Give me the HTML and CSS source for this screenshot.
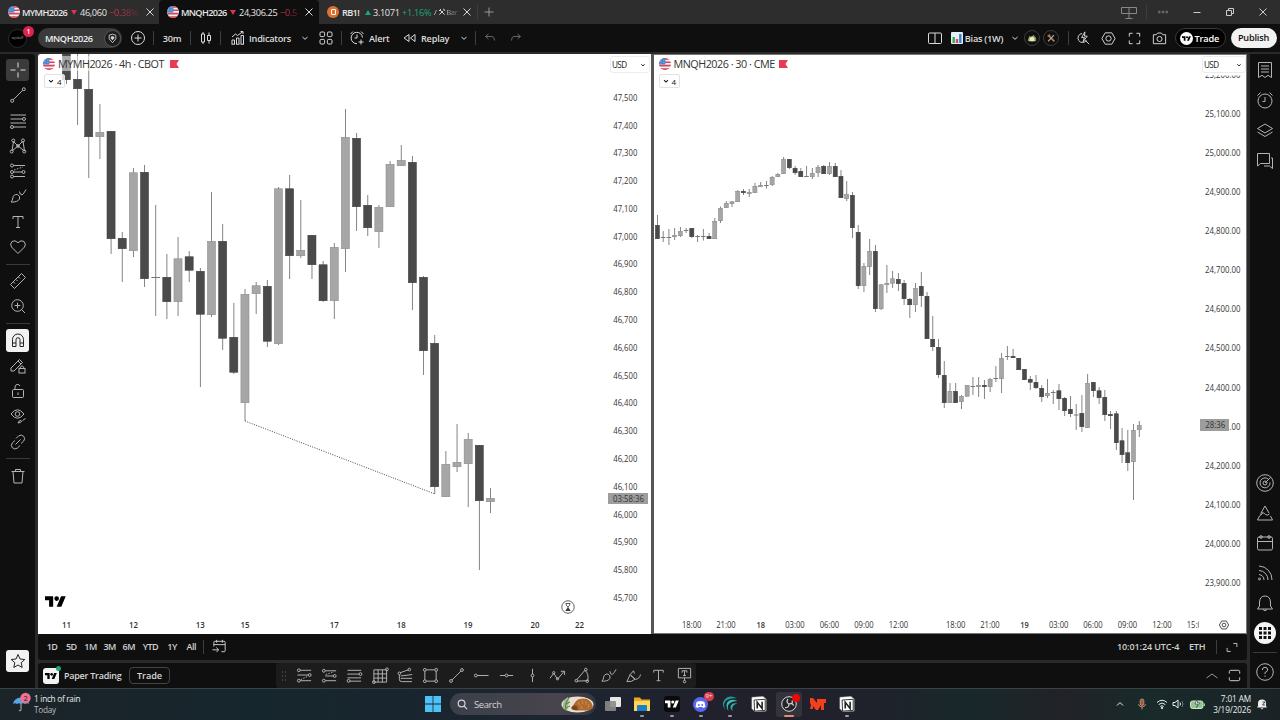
FILE: index.html
```
<!DOCTYPE html>
<html lang="en">
<head>
    <meta charset="UTF-8">
    <title>MNQH2026 24,306.25 Bias (1W)</title>
    <link rel="stylesheet" href="styles.css">
</head>
<body>
    <!-- icon sprite -->
    <svg class="sprite" width="0" height="0">
        <defs>
            <clipPath id="round"><circle cx="6" cy="6" r="6"/></clipPath>
        </defs>
        <symbol id="flag" viewBox="0 0 12 12">
            <g clip-path="url(#round)" stroke="none">
                <rect width="12" height="12" fill="#f3f3f5"/>
                <path fill="#e0404f" d="M0 0h12v1.7H0zM0 3.4h12v1.7H0zM0 6.8h12v1.7H0zM0 10.2h12V12H0z"/>
                <path fill="#3f82cf" d="M0 0h6.4v6.4H0z"/>
                <path stroke="#b5d4f5" stroke-width=".6" stroke-dasharray=".7 .8" d="M1 1.6h5M1 3.2h5M1 4.8h5"/>
            </g>
        </symbol>
        <symbol id="tv" viewBox="0 0 36 18"><path fill="currentColor" stroke="none" d="M14 18H7V7H0V0h14zM28 18h-8L27.500 0h8z"/><circle fill="currentColor" stroke="none" cx="20" cy="4" r="4"/></symbol>
        <symbol id="x" viewBox="0 0 18 18"><path d="M5.500 5.500l7 7M12.500 5.500l-7 7"/></symbol>
        <symbol id="plus" viewBox="0 0 18 18"><path d="M9 4.500v9M4.500 9h9"/></symbol>
        <symbol id="down" viewBox="0 0 18 18"><path d="M6.500 8L9 10.300 11.500 8"/></symbol>
        <symbol id="up" viewBox="0 0 18 18"><path d="M3.500 11L9 7l5.500 4"/></symbol>
        <symbol id="shield" viewBox="0 0 18 18"><path d="M5 5l4-1.200L13 5v4.500L9 14 5 9.500z"/><path fill="currentColor" d="M7.500 7h3v2L9 10.500 7.500 9z"/></symbol>
        <symbol id="pluscircle" viewBox="0 0 18 18"><circle cx="9" cy="9" r="6.500"/><path d="M9 5.500v7M5.500 9h7"/></symbol>
        <symbol id="candles" viewBox="0 0 18 18"><path d="M4.500 5h3v8h-3zM6 3v2M6 13v2M10.500 6.500h3v5h-3zM12 3.500v3M12 11.500v3"/></symbol>
        <symbol id="indicators" viewBox="0 0 18 18"><path d="M3 15v-4h2.500v4M7.500 15V9H10v6M12 15V6.500h2.500V15M2.500 15.200h3.500M7 15.200h3.500M11.500 15.200H15M3 8l3.500-3 2 1.500L14 2.500M11.500 2.500H14V5"/></symbol>
        <symbol id="grid4" viewBox="0 0 18 18"><rect x="3" y="3" width="4.600" height="4.600" rx="1.200"/><rect x="10.400" y="3" width="4.600" height="4.600" rx="1.200"/><rect x="3" y="10.400" width="4.600" height="4.600" rx="1.200"/><rect x="10.400" y="10.400" width="4.600" height="4.600" rx="1.200"/></symbol>
        <symbol id="alertadd" viewBox="0 0 18 18"><path d="M14.500 8.500A5.700 5.700 0 1 0 9 14.700M9 5.500V9H6.500M2.500 5L5 2.500M13 2.500L15.500 5M13 10.500v5M10.500 13h5"/></symbol>
        <symbol id="replay" viewBox="0 0 18 18"><path d="M8 5.500v7L3 9zM14 5.500v7L9.500 9z"/></symbol>
        <symbol id="undo" viewBox="0 0 18 18"><path d="M7.500 5L4.500 7.500 7.500 10M4.500 7.500H11q2.500 0 2.500 4"/></symbol>
        <symbol id="redo" viewBox="0 0 18 18"><path d="M10.500 5l3 2.500-3 2.500M13.500 7.500H7q-2.500 0-2.500 4"/></symbol>
        <symbol id="split" viewBox="0 0 18 18"><rect x="2.500" y="4" width="13" height="10.500" rx="1"/><path d="M9 4v10.500"/></symbol>
        <symbol id="bars" viewBox="0 0 12 12"><rect stroke="none" width="12" height="12" rx="1" fill="#e4eef5"/><g stroke="none"><path fill="#36a852" d="M1.500 5h2.400v6H1.500z"/><path fill="#d94a5c" d="M4.800 7h2.400v4H4.800z"/><path fill="#3c7fd0" d="M8.100 2h2.400v9H8.100z"/></g></symbol>
        <symbol id="boltsearch" viewBox="0 0 18 18"><path d="M7.500 3.700a4.800 4.800 0 1 0 4.600 7.200M11 11l4 4M10.500 2L7 8h3L8.500 12.500 13 6.500h-3z"/></symbol>
        <symbol id="hex" viewBox="0 0 18 18"><path d="M5.500 3h7L16 9l-3.500 6h-7L2 9z"/><circle cx="9" cy="9" r="2.800"/></symbol>
        <symbol id="corners" viewBox="0 0 18 18"><path d="M3.500 7V3.500H7M11 3.500h3.500V7M14.500 11v3.500H11M7 14.500H3.500V11"/></symbol>
        <symbol id="camera" viewBox="0 0 18 18"><path d="M2.500 5h3L7 3.200h4L12.500 5h3v9.500h-13z"/><circle cx="9" cy="9.500" r="2.700"/></symbol>
        <symbol id="cross" viewBox="0 0 18 18"><path d="M9 1.500v5M9 11.500v5M1.500 9h5M11.500 9h5"/></symbol>
        <symbol id="trend" viewBox="0 0 18 18"><path d="M4.300 13.700l9.400-9.400"/><circle cx="3.200" cy="14.800" r="1.500"/><circle cx="14.800" cy="3.200" r="1.500"/></symbol>
        <symbol id="fib" viewBox="0 0 18 18"><path d="M1.500 3H17M1.500 7h12M1.500 11H17M4.500 15H17"/><circle cx="15" cy="7" r="1.500"/><circle cx="3" cy="15" r="1.500"/></symbol>
        <symbol id="pattern" viewBox="0 0 18 18"><path d="M3 14L4.500 4.500 9 9l5-5 1.500 10L9 9 3 14"/><circle cx="2.700" cy="14.500" r="1.500"/><circle cx="4.300" cy="3.500" r="1.500"/><circle cx="14" cy="3.500" r="1.500"/><circle cx="15.300" cy="14.500" r="1.500"/><circle cx="9" cy="9" r="1.300"/></symbol>
        <symbol id="forecast" viewBox="0 0 18 18"><path d="M4.500 3.500H16M4.500 10H13M4.500 14.500H16"/><path stroke-dasharray="1.500 1.500" d="M5 8l9-3"/><circle cx="3" cy="3.500" r="1.500"/><circle cx="3" cy="10" r="1.500"/><circle cx="14.500" cy="10" r="1.500"/><circle cx="3" cy="14.500" r="1.500"/></symbol>
        <symbol id="retrace" viewBox="0 0 18 18"><path d="M4.500 3.500H16M1.500 8.500H13M4.500 14.500H16"/><path stroke-dasharray="1.500 1.500" d="M5 13.500l8-4"/><circle cx="3" cy="3.500" r="1.500"/><circle cx="14.500" cy="8.500" r="1.500"/><circle cx="3" cy="14.500" r="1.500"/></symbol>
        <symbol id="project" viewBox="0 0 18 18"><path d="M4.500 4H16M4.500 9.500H13M4.500 14.500H16"/><path stroke-dasharray="1.500 1.500" d="M5 8l9-3"/><circle cx="3" cy="4" r="1.500"/><circle cx="14.500" cy="9.500" r="1.500"/><circle cx="3" cy="14.500" r="1.500"/></symbol>
        <symbol id="brush" viewBox="0 0 18 18"><path d="M2 15q1.500-1 1.800-4Q4.500 7 8.500 7.500q3 1.500 2 4.500Q8.500 15.500 2 15zM10.500 4.500q0 3 2.500 3.500 2-1.500 4-5.500"/></symbol>
        <symbol id="text" viewBox="0 0 18 18"><path d="M4 6V3.500h10V6M9 3.500v11M7 14.500h4"/></symbol>
        <symbol id="heart" viewBox="0 0 18 18"><path d="M9 15.500L2.500 9Q.500 6 3 3.500q3-2 6 1.200 3-3.200 6-1.200 2.500 2.500.5 5.500z"/></symbol>
        <symbol id="ruler" viewBox="0 0 18 18"><path d="M1.500 12.500l11-11 4 4-11 11zM4.500 10l1.500 1.500M7 7.500L8.500 9M9.500 5L11 6.500M12 2.500"/></symbol>
        <symbol id="zoomin" viewBox="0 0 18 18"><circle cx="8.500" cy="8.500" r="5.800"/><path d="M12.700 12.700l3.300 3.300M8.500 5.700v5.600M5.700 8.500h5.600"/></symbol>
        <symbol id="magnet" viewBox="0 0 18 18"><path d="M3.500 15.500V8.500a5.500 5.500 0 0 1 11 0v7H11V8.700a2 2 0 0 0-4 0v6.800zM3.500 12H7M11 12h3.500"/></symbol>
        <symbol id="pencillock" viewBox="0 0 18 18"><path d="M2 11L10.500 2.500l3 3L5 14H2zM9 4l3 3"/><rect x="10" y="11.500" width="6" height="4.500"/><path d="M11.300 11.500V10q1.700-2.500 3.400 0v1.500"/></symbol>
        <symbol id="lock" viewBox="0 0 18 18"><rect x="3.500" y="7.500" width="11" height="8" rx="1"/><path d="M6 7.500V5a2.600 2.600 0 0 1 5-1M9 10.500v2.500" /></symbol>
        <symbol id="eye" viewBox="0 0 18 18"><path d="M2 7q6.500-8.500 13 0-6.500 8.500-13 0z"/><circle cx="8.500" cy="7" r="2.300"/><path d="M9 16q1-3 3-2.500 2 1.500-3 2.500zM13.500 13.500l3-2"/></symbol>
        <symbol id="link" viewBox="0 0 18 18"><path d="M7 5.500l2.700-2.700q3-1.700 5 .5t0 4.700L12 10.500M11 12.500l-2.700 2.700q-3 1.700-5-.5t0-4.700L6 7.500M6.500 11.500l5-5"/></symbol>
        <symbol id="trash" viewBox="0 0 18 18"><path d="M2.500 4.500h13M6.500 4.500v-2h5v2M4 4.500l1 11.500h8l1-11.500"/></symbol>
        <symbol id="star" viewBox="0 0 18 18"><path d="M9 2.500l2 4.500 4.800.5-3.600 3.200 1 4.800L9 13l-4.200 2.500 1-4.800L2.200 7.500 7 7z"/></symbol>
        <symbol id="notes" viewBox="0 0 18 18"><path d="M2.500 1.500h13v15L12 14.300 9 16.500l-3-2.200-3.500 2.200zM5 5h8M5 8h8M5 11h8"/></symbol>
        <symbol id="alarm" viewBox="0 0 18 18"><circle cx="9" cy="10" r="7"/><path d="M9 6v4.500H6.500M1.500 4.500l3-3M13.500 1.500l3 3"/></symbol>
        <symbol id="layers" viewBox="0 0 18 18"><path d="M1.500 7.500L9 3l7.500 4.500L9 12zM1.500 11L9 15.500l7.500-4.500"/></symbol>
        <symbol id="chat" viewBox="0 0 18 18"><path d="M1.500 2.500h12v10H4.500l-3 2.500zM15 7h1.500v10.500l-3-2.500H8"/></symbol>
        <symbol id="radar" viewBox="0 0 18 18"><circle cx="9" cy="9" r="8.300"/><path d="M12.200 5A5 5 0 1 0 14 8.500M9 9l5.500-5.500"/><circle cx="9" cy="9" r="2"/></symbol>
        <symbol id="mountain" viewBox="0 0 18 18"><path d="M5 9l4-7 4 7M4 10.500q3-3.500 5.500 0 2 1.500 4-.5M3.500 12L1.500 16h15l-2-4M3.500 12l3-2.500"/></symbol>
        <symbol id="calendar" viewBox="0 0 18 18"><path d="M3 3h12q1.500 0 1.500 1.500v10Q16.500 16 15 16H3q-1.500 0-1.500-1.500v-10Q1.500 3 3 3zM1.500 7.500h15"/><circle cx="5" cy="3" r="1.300"/><circle cx="13" cy="3" r="1.300"/></symbol>
        <symbol id="rss" viewBox="0 0 18 18"><path d="M3 2a13.500 13.500 0 0 1 13 14M3 6.500A9.300 9.300 0 0 1 12 16M3 10.500A5.500 5.500 0 0 1 8 16"/><circle cx="3.500" cy="15" r="1"/></symbol>
        <symbol id="bell" viewBox="0 0 18 18"><path d="M1.500 15h15l-2-3V8q-.5-6-5.500-6T3.500 8v4zM7 15.500q2 2.500 4 0"/></symbol>
        <symbol id="apps" viewBox="0 0 18 18"><path fill="currentColor" stroke="none" d="M3 3h3v3H3zM7.500 3h3v3h-3zM12 3h3v3h-3zM3 7.500h3v3H3zM7.500 7.500h3v3h-3zM12 7.500h3v3h-3zM3 12h3v3H3zM7.500 12h3v3h-3zM12 12h3v3h-3z"/></symbol>
        <symbol id="help" viewBox="0 0 18 18"><circle cx="9" cy="9" r="8.300"/><path d="M6.300 7q0-2.700 2.700-2.700T11.700 7Q11.500 8.500 9 9.500V11M9 12.500v1.300"/></symbol>
        <symbol id="goto" viewBox="0 0 18 18"><path d="M3 9V4.500Q3 3.500 4 3.500h10q1 0 1 1v9q0 1-1 1h-3M3 7h12M6 2v3M12 2v3M1.500 12.500H8M5.800 10L8 12.500 5.800 15"/></symbol>
        <symbol id="expand" viewBox="0 0 18 18"><path d="M10.500 5h4v4M3.500 10v4h4"/></symbol>
        <symbol id="lines" viewBox="0 0 18 18"><path d="M1.500 3.500H16M1.500 7.500H14M1.500 11.500H16M4 15H16"/><circle cx="15.300" cy="7.500" r="1.500"/><circle cx="2.700" cy="14.700" r="1.500"/></symbol>
        <symbol id="gann" viewBox="0 0 18 18"><path d="M2 3h13.500v13H2zM6.500 3v13M11 3v13M2 7.300h13.500M2 11.700h13.500"/><circle cx="2" cy="16" r="1.500"/><circle cx="15.800" cy="2.500" r="1.500"/></symbol>
        <symbol id="channel" viewBox="0 0 18 18"><path d="M3.500 6l8.500-3M4 9.500L16 8M4 12H16M2.500 8.500V13q0 2.500 2.500 2.500H16"/><circle cx="2.500" cy="6.700" r="1.400"/><circle cx="13" cy="2.700" r="1.400"/></symbol>
        <symbol id="rect" viewBox="0 0 18 18"><path d="M3 3h12v12H3z"/><g fill="#1c1c1c"><circle cx="3" cy="3" r="1.500"/><circle cx="15" cy="3" r="1.500"/><circle cx="3" cy="15" r="1.500"/><circle cx="15" cy="15" r="1.500"/></g></symbol>
        <symbol id="ray" viewBox="0 0 18 18"><circle cx="3" cy="9" r="1.500"/><path d="M4.500 9H16.500"/></symbol>
        <symbol id="hline" viewBox="0 0 18 18"><circle cx="9" cy="9" r="1.500"/><path d="M2 9h5.500M10.500 9H16"/></symbol>
        <symbol id="vline" viewBox="0 0 18 18"><circle cx="9" cy="9" r="1.500"/><path d="M9 2v5.500M9 10.500V16"/></symbol>
        <symbol id="zigzag" viewBox="0 0 18 18"><path d="M1 12l4-5.500 4 6.500 7-8.500M12.500 4.500H16.500V8.500"/><circle cx="5" cy="6" r="1.200"/><circle cx="9" cy="12.500" r="1.200"/></symbol>
        <symbol id="arc" viewBox="0 0 18 18"><path d="M3 13.500L11.500 3.500Q16 7 14.500 14.500L3 15"/><circle cx="12.500" cy="2.700" r="1.400"/><circle cx="2.500" cy="14.500" r="1.400"/><circle cx="14" cy="15" r="1.400"/></symbol>
        <symbol id="marker" viewBox="0 0 18 18"><path d="M2 15.500L5.500 8l5 5q-3 3-8.500 2.500zM5.500 8l3.500-4M6 9l5 4q4 0 5.500-5M9 4l1 3"/></symbol>
        <symbol id="callout" viewBox="0 0 18 18"><path d="M2.500 1.500h13v10h-13zM6.500 6V4h5v2M9 4v5M7.500 9h3M9 11.500V14"/><circle cx="9" cy="15.500" r="1.300"/></symbol>
        <symbol id="hourglass" viewBox="0 0 18 18"><circle cx="9" cy="9" r="8"/><path fill="currentColor" d="M6.500 13.500h5L9 9.500z"/><path d="M6 4.500h6M6 13.500h6M6.500 4.500q0 3 2.500 4.500 2.500-1.500 2.500-4.500"/></symbol>
        <symbol id="notion" viewBox="0 0 18 18"><path fill="#fff" stroke="#bbb" stroke-width=".6" d="M1 1.500L13.500.6 17 3.500V17l-12.500.6L1 14z"/><path fill="#fff" stroke="#222" stroke-width="1" d="M3.500 4.500L16 3.700v12.500l-12 .8z"/><path stroke="#222" stroke-width="1.800" d="M7 14V7l5.500 7V6.500"/></symbol>
    </svg>

    <div class="tabs">
        <div class="tab">
            <svg class="coin"><use href="#flag"/></svg>
            <b>MYMH2026</b><i class="tri"></i><span class="price">46,060</span><span class="pct fade red">−0.38%</span>
            <svg class="close"><use href="#x"/></svg>
        </div>
        <div class="tab active">
            <svg class="coin"><use href="#flag"/></svg>
            <b>MNQH2026</b><i class="tri"></i><span class="price long">24,306.25</span><span class="pct short fade red">−0.5</span>
            <svg class="close"><use href="#x"/></svg>
        </div>
        <div class="tab third">
            <span class="coin orange"><i></i></span>
            <b class="rb">RB1!</b><i class="tri rise"></i><span class="price">3.1071</span><span class="pct green">+1.16%</span><span class="layout fade">/ <svg viewBox="0 0 12 12"><path d="M2 10l6-6M3 3l7 7M1.500 4.500l3-3M7.500 1.500q2.500 0 3 3"/></svg>Bar</span>
            <svg class="close"><use href="#x"/></svg>
        </div>
        <div class="newtab"><i class="sep"></i><svg><use href="#plus"/></svg></div>
        <div class="window">
            <svg class="screens" viewBox="0 0 18 18"><path d="M1.500 4.500h15v6h-15zM9 4.500v11M5.500 15.500h7"/></svg>
            <i class="sep"></i>
            <svg class="dots" viewBox="0 0 18 18"><circle cx="3.500" cy="9" r="1.400"/><circle cx="9" cy="9" r="1.400"/><circle cx="14.500" cy="9" r="1.400"/></svg>
            <svg viewBox="0 0 18 18"><path d="M5.500 9.500h7"/></svg>
            <svg viewBox="0 0 18 18"><path d="M5.500 7.500h5v5h-5zM7.500 7.500v-2h5v5h-2"/></svg>
            <svg viewBox="0 0 18 18"><path d="M5.500 5.500l7 7M12.500 5.500l-7 7"/></svg>
        </div>
    </div>

    <div class="toolbar">
        <div class="avatar"><span>wyckoff</span><em>1</em></div>
        <div class="symbol"><b>MNQH2026</b><span><svg><use href="#shield"/></svg></span></div>
        <div class="tool add"><svg><use href="#pluscircle"/></svg></div>
        <i class="sep"></i>
        <div class="tool interval">30m</div>
        <i class="sep"></i>
        <div class="tool style"><svg><use href="#candles"/></svg></div>
        <i class="sep"></i>
        <div class="tool ind"><svg><use href="#indicators"/></svg></div>
        <div class="label l-ind">Indicators</div>
        <div class="tool chev"><svg><use href="#down"/></svg></div>
        <div class="tool tpl"><svg><use href="#grid4"/></svg></div>
        <i class="sep"></i>
        <div class="tool alert"><svg><use href="#alertadd"/></svg></div>
        <div class="label l-alert">Alert</div>
        <div class="tool rep"><svg><use href="#replay"/></svg></div>
        <div class="label l-replay">Replay</div>
        <div class="tool chev"><svg><use href="#down"/></svg></div>
        <i class="sep"></i>
        <div class="tool hist"><svg><use href="#undo"/></svg></div>
        <div class="tool hist"><svg><use href="#redo"/></svg></div>
        <div class="right">
            <div class="tool"><svg><use href="#split"/></svg></div>
            <svg class="barsicon"><use href="#bars"/></svg>
            <div class="label l-bias">Bias (1W)</div>
            <div class="tool chev"><svg><use href="#down"/></svg></div>
            <div class="round"><svg viewBox="0 0 12 12"><path fill="#6f9a4c" d="M1 8l2-5 2 2 3-3 3 4v4H1z"/><path fill="#efe3c0" d="M3 6l3-2 3 2v4H3z"/></svg></div>
            <div class="round"><svg viewBox="0 0 12 12"><path stroke="#c98045" stroke-width="2" d="M3 3l7 7"/><path stroke="#9fb4c4" stroke-width="1.500" d="M9.500 2.500L2.500 10"/><path stroke="#d9683b" stroke-width="2" d="M2 4l3-2"/></svg></div>
            <i class="sep"></i>
            <div class="tool t"><svg><use href="#boltsearch"/></svg></div>
            <div class="tool t"><svg><use href="#hex"/></svg></div>
            <div class="tool t"><svg><use href="#corners"/></svg></div>
            <div class="tool t"><svg><use href="#camera"/></svg></div>
            <div class="trade"><span><svg><use href="#tv"/></svg></span>Trade</div>
            <div class="publish">Publish</div>
        </div>
    </div>

    <div class="main">
        <div class="left-bar">
            <div class="btn on"><svg><use href="#cross"/></svg></div>
            <div class="btn"><svg><use href="#trend"/></svg></div>
            <div class="btn"><svg><use href="#fib"/></svg></div>
            <div class="btn"><svg><use href="#pattern"/></svg></div>
            <div class="btn"><svg><use href="#forecast"/></svg></div>
            <div class="btn"><svg><use href="#brush"/></svg></div>
            <div class="btn"><svg><use href="#text"/></svg></div>
            <div class="btn"><svg><use href="#heart"/></svg></div>
            <hr>
            <div class="btn"><svg><use href="#ruler"/></svg></div>
            <div class="btn"><svg><use href="#zoomin"/></svg></div>
            <hr>
            <div class="btn white"><svg><use href="#magnet"/></svg></div>
            <div class="btn"><svg><use href="#pencillock"/></svg></div>
            <div class="btn"><svg><use href="#lock"/></svg></div>
            <div class="btn"><svg><use href="#eye"/></svg></div>
            <div class="btn"><svg><use href="#link"/></svg></div>
            <hr>
            <div class="btn"><svg><use href="#trash"/></svg></div>
            <div class="btn white last"><svg><use href="#star"/></svg></div>
        </div>

        <div class="center">
            <div class="charts">
                <div class="chart one">
                    <svg id="chart1" class="plot" viewBox="38 54 613 580"></svg>
                    <div class="legend"><svg class="coin"><use href="#flag"/></svg><span>MYMH2026 · 4h · CBOT</span><svg class="mark" viewBox="0 0 9 8"><path d="M0 0h9L6.500 4 9 8H0z"/></svg></div>
                    <div class="count"><svg><use href="#down"/></svg>4</div>
                    <div class="currency"><span>USD</span><svg><use href="#down"/></svg></div>
                    <svg class="tvlogo"><use href="#tv"/></svg>
                    <svg class="hour"><use href="#hourglass"/></svg>
                </div>
                <div class="chart two">
                    <svg id="chart2" class="plot" viewBox="654 54 593 580"></svg>
                    <div class="legend"><svg class="coin"><use href="#flag"/></svg><span>MNQH2026 · 30 · CME</span><svg class="mark" viewBox="0 0 9 8"><path d="M0 0h9L6.500 4 9 8H0z"/></svg></div>
                    <div class="count"><svg><use href="#down"/></svg>4</div>
                    <div class="currency"><span>USD</span><svg><use href="#down"/></svg></div>
                    <svg class="axisset"><use href="#hex"/></svg>
                </div>
            </div>
            <div class="ranges">
                <span>1D</span><span>5D</span><span>1M</span><span>3M</span><span>6M</span><span class="ytd">YTD</span><span>1Y</span><span>All</span>
                <i class="sep"></i>
                <svg class="goto"><use href="#goto"/></svg>
                <div class="clock">10:01:24 UTC-4</div>
                <div class="eth">ETH</div>
                <i class="sep"></i>
                <svg class="expand"><use href="#expand"/></svg>
            </div>
            <div class="bottom">
                <div class="broker"><svg><use href="#tv"/></svg><i></i></div>
                <div class="paper">Paper Trading</div>
                <div class="tradebtn">Trade</div>
                <div class="favs">
                    <svg class="grip" viewBox="0 0 6 10"><path d="M1 1h1M4 1h1M1 5h1M4 5h1M1 9h1M4 9h1"/></svg>
                    <svg><use href="#retrace"/></svg>
                    <svg><use href="#project"/></svg>
                    <svg><use href="#lines"/></svg>
                    <svg><use href="#gann"/></svg>
                    <svg><use href="#channel"/></svg>
                    <svg><use href="#rect"/></svg>
                    <svg><use href="#trend"/></svg>
                    <svg><use href="#ray"/></svg>
                    <svg><use href="#hline"/></svg>
                    <svg><use href="#vline"/></svg>
                    <svg><use href="#zigzag"/></svg>
                    <svg><use href="#arc"/></svg>
                    <svg><use href="#brush"/></svg>
                    <svg><use href="#marker"/></svg>
                    <svg><use href="#text"/></svg>
                    <svg><use href="#callout"/></svg>
                </div>
                <svg class="panelup"><use href="#up"/></svg>
                <svg class="panelmax" viewBox="0 0 18 18"><path d="M3.500 7V5q0-1.500 1.500-1.500h8q1.500 0 1.500 1.500v2M3.500 11v2q0 1.500 1.500 1.500h8q1.500 0 1.500-1.500v-2"/></svg>
            </div>
        </div>

        <div class="right-bar">
            <div class="btn"><svg><use href="#notes"/></svg></div>
            <div class="btn"><svg><use href="#alarm"/></svg></div>
            <div class="btn"><svg><use href="#layers"/></svg></div>
            <div class="btn"><svg><use href="#chat"/></svg></div>
            <div class="btn push"><svg><use href="#radar"/></svg></div>
            <div class="btn"><svg><use href="#mountain"/></svg></div>
            <div class="btn"><svg><use href="#calendar"/></svg></div>
            <div class="btn"><svg><use href="#rss"/></svg></div>
            <div class="btn"><svg><use href="#bell"/></svg></div>
            <div class="btn apps"><svg><use href="#apps"/></svg></div>
            <hr>
            <div class="btn"><svg><use href="#help"/></svg></div>
        </div>
    </div>

    <div class="taskbar">
        <div class="weather">
            <svg viewBox="0 0 22 22"><path fill="#58a6e8" d="M2 12q1-6 8-6.500t8 6.500q-2-1.500-4 0-2-1.500-4 0-2-1.500-4 0-2-1.500-4 0z"/><path fill="none" stroke="#8b97a3" stroke-width="1.300" d="M10 11v7q-1 1.500-2 0"/><circle cx="14.500" cy="6" r="5.200" fill="#f0718c"/><text x="14.500" y="8.600" text-anchor="middle">2</text></svg>
            <div>1 inch of rain<br><span>Today</span></div>
        </div>
        <div class="apps-row">
            <div class="app"><svg viewBox="0 0 16 16"><path fill="#4cc2f7" d="M0 0h7.600v7.600H0zM8.400 0H16v7.600H8.400zM0 8.400h7.600V16H0zM8.400 8.400H16V16H8.400z"/></svg></div>
            <div class="search">
                <svg class="lens" viewBox="0 0 18 18"><circle cx="7.500" cy="7.500" r="5.500"/><path d="M11.500 11.500l5 5"/></svg>
                <span>Search</span>
                <svg class="pet" viewBox="0 0 33 17"><ellipse cx="16.500" cy="8.500" rx="16" ry="8" fill="#e9dfcf"/><path fill="#9fb98c" d="M2 12Q1 4 7 1l1 5-2 9z"/><path stroke="#4f7f49" fill="none" d="M5 15Q3 8 8 2M5 8l4-2M5 12l4-2"/><path fill="#b06a30" d="M12 13Q12 3 22 2.500q9 0 10 9.500l-4 2.500H14z"/><path fill="#7c4519" d="M10 12q2-4 6-2l1 4h-5z"/><path stroke="#d99a5c" stroke-width=".7" d="M17 6l2 3M21 4l1 4M25 5l0 4M28 8l-1 4M20 10l1 3"/></svg>
            </div>
            <div class="app"><svg viewBox="0 0 16 16"><rect x="5" y="1" width="11" height="10" rx="1" fill="#e6e6e6"/><rect x="0" y="5" width="11" height="10" rx="1" fill="#8a8a8a" opacity=".9"/></svg></div>
            <div class="app run"><svg viewBox="0 0 16 16"><path fill="#e9a823" d="M0 1.500h6l1.500 2H16V15H0z"/><path fill="#ffd75e" d="M0 5h16v10H0z"/><path fill="#1d7fc4" d="M3 10q0-1 1-1h8q1 0 1 1v5H3z"/></svg></div>
            <div class="app run tvapp"><svg><use href="#tv"/></svg></div>
            <div class="app run"><svg viewBox="0 0 16 16"><circle cx="7.500" cy="8.500" r="7.500" fill="#5865f2"/><path fill="#fff" d="M3.500 6q4-2 8 0l1 5-2.500 1-.8-1H5.800L5 12l-2.500-1z"/><circle cx="5.800" cy="9" r=".9" fill="#5865f2"/><circle cx="9.200" cy="9" r=".9" fill="#5865f2"/></svg><em>9+</em></div>
            <div class="app run"><svg viewBox="0 0 16 16"><path fill="#1f9a94" d="M15 2.500Q8-1.500 3 3-1.500 8.500 3.500 14.500 0 7 5 4q4-2.500 10-1.500z"/><path fill="#35c0b2" d="M15.500 5Q9 2 5.500 6q-2.500 4 1 9Q4.500 9.500 8 7q3-2 7.500-2z"/><path fill="#2aaea4" d="M15.500 7.500q-5-1-6.800 2-.9 3 1.800 5.500-.8-4 1-5.500 1.500-1.500 4-2z"/></svg></div>
            <div class="app"><svg><use href="#notion"/></svg></div>
            <div class="app run focus"><svg viewBox="0 0 16 16"><circle cx="8" cy="8" r="7.300" fill="#26242a" stroke="#d8d8d8" stroke-width="1"/><path fill="none" stroke="#d8d8d8" stroke-width="1.200" d="M7 3Q4.500 6 8 8q3.500-1.500 4.500 1.500M8 8q0 4-4 3.500M11 4.500Q12.500 8 8 8"/></svg><i></i></div>
            <div class="app"><svg viewBox="0 0 16 16"><path fill="#f1401b" d="M0 2h3l4 5V3h9v4h-2v7h-3V9L8 14H6L3 10v3H0l1-4-1-2z"/></svg></div>
            <div class="app run"><svg><use href="#notion"/></svg></div>
        </div>
        <div class="tray">
            <svg class="w22" viewBox="0 0 12 12"><path d="M3 7.500l3-3 3 3"/></svg>
            <svg class="mic w22" viewBox="0 0 12 12"><rect x="4.200" y="1" width="3.600" height="6.500" rx="1.800" fill="#9c5a3d"/><path d="M2.500 6q.5 3 3.500 3t3.500-3M6 9v2.500"/></svg>
            <svg class="w18" viewBox="0 0 12 12"><path d="M1 4.500q5-4.500 10 0M2.700 6.500q3.300-3 6.600 0M4.300 8.500q1.700-1.500 3.400 0"/><circle cx="6" cy="10" r=".7" fill="#eee"/></svg>
            <svg class="w14" viewBox="0 0 12 12"><path d="M1 4.500h2L6 2v8L3 7.500H1zM8 4.500q1 1.500 0 3"/><path opacity=".4" d="M10 3q2 3 0 6"/></svg>
            <svg class="batt" viewBox="0 0 15 10"><rect x=".5" y="1.500" width="12.500" height="7.500" rx="2" fill="#8fc48b" stroke="#cfe8cc"/><path stroke="#cfe8cc" d="M14.300 4v2.500"/><path fill="#fff" stroke="#234" stroke-width=".6" d="M7 0L5 4.500h3L6.500 8 10 3.500H7.500z"/></svg>
            <div class="time">7:01 AM<br>3/19/2026</div>
            <svg class="notif" viewBox="0 0 12 12"><path fill="#eee" stroke="none" d="M1 9.500L2 8V5q0-3.500 4-3.500T10 5v3l1 1.500zM4.500 10.300h3L6 11.500z"/><path stroke="#223" stroke-width=".8" d="M6.500 4H9L6.500 7H9"/></svg>
        </div>
    </div>

    <script src="chart.js"></script>
</body>
</html>
```
FILE: styles.css
```
* { box-sizing: border-box; }
body { margin: 0; width: 1280px; height: 720px; overflow: hidden; background: #2a2a2a; color: #d8d8d8; font-family: "Open Sans", "Noto Sans", sans-serif; font-size: 9.200px; }
svg { display: block; flex: none; width: 18px; height: 18px; fill: none; stroke: currentColor; stroke-width: 1; }
.sprite { position: absolute; width: 0; height: 0; }
b { font-weight: 600; }
em, i { font-style: normal; }
.sep { width: 1px; height: 14px; background: #3d3d3d; flex: none; }

/* tabs */
.tabs { display: flex; height: 24px; background: #2d2d2d; align-items: stretch; white-space: nowrap; }
.tab { width: 159px; display: flex; align-items: center; padding-left: 8px; flex: none; }
.tab.active { width: 160px; background: #0f0f0f; border-radius: 4px 4px 0 0; }
.tab.third { width: 158px; }
.coin { width: 12px; height: 12px; flex: none; }
.tab b { width: 46px; margin-left: 2px; color: #e6e6e6; letter-spacing: -0.65px; flex: none; }
.tab b.rb { width: 20px; margin-left: 3px; }
.tri { width: 0; height: 0; margin: 0 3px; border: 3px solid transparent; border-top: 5px solid #d9344f; border-bottom: 0; flex: none; }
.tri.rise { margin-right: 2px; border-top: 0; border-bottom: 5px solid #1fa37d; }
.price { width: 29px; flex: none; color: #e6e6e6; letter-spacing: -0.35px; }
.price.long { width: 41px; }
.pct { width: 31px; overflow: hidden; flex: none; letter-spacing: -0.3px; }
.pct.short { width: 20px; }
.red { color: #c5364d; }
.green { color: #1fa37d; }
.layout { width: 25px; flex: none; margin-left: 1px; font-size: 7.600px; display: flex; align-items: center; letter-spacing: -0.5px; }
.layout svg { width: 8px; height: 8px; margin: 0 0 0 2px; stroke-width: 1.500; }
.fade { -webkit-mask-image: linear-gradient(90deg, #000 30%, transparent 115%); mask-image: linear-gradient(90deg, #000 30%, transparent 115%); }
.close { margin-left: auto; }
.active .close { margin-right: 1px; }
.third .close { margin-left: -1px; }
.orange { background: #e0702f; border-radius: 50%; display: flex; align-items: center; justify-content: center; }
.orange i { width: 5px; height: 6px; border: 1.5px solid #fff; border-radius: 1px; }
.newtab { display: flex; align-items: center; width: 24px; color: #999; }
.newtab svg { margin-left: 2px; }
.window { margin-left: auto; display: flex; align-items: center; color: #ccc; margin-right: 8px; }
.window svg { margin-left: 15px; }
.window .screens { margin: 0 8px 0 0; color: #888; }
.window .dots { width: 12px; height: 12px; margin: 0 4px 0 10px; color: #999; }

/* top toolbar */
.toolbar { display: flex; align-items: center; height: 28px; background: #0f0f0f; font-weight: 600; color: #dcdcdc; white-space: nowrap; }
.tool { display: flex; align-items: center; justify-content: center; flex: none; }
.label { flex: none; letter-spacing: -0.25px; }
.avatar { position: relative; width: 19px; height: 19px; margin: 0 11px 0 8px; border-radius: 50%; background: #000; border: 1px solid #262c30; flex: none; display: flex; align-items: center; justify-content: center; }
.avatar span { font-size: 3px; color: #888; }
.avatar em { position: absolute; left: 14px; top: -4px; width: 11px; height: 11px; border-radius: 50%; background: #e0214f; color: #fff; font-size: 7px; line-height: 11px; text-align: center; }
.symbol { width: 84px; height: 20px; border-radius: 10px; background: #3a3a3a; display: flex; align-items: center; justify-content: space-between; padding: 0 1px 0 7px; flex: none; }
.symbol b { color: #eee; letter-spacing: -0.4px; }
.symbol span { width: 17px; height: 17px; border-radius: 50%; background: #1c1c1c; border: 1px solid #555; display: flex; align-items: center; justify-content: center; }
.symbol svg { width: 15px; height: 15px; }
.add { width: 31px; }
.interval { width: 36px; letter-spacing: -0.2px; }
.style { width: 29px; }
.ind { width: 18px; margin-left: 8px; }
.l-ind { width: 42px; margin-left: 2px; }
.chev { width: 28px; }
.tpl { width: 14px; margin-right: 8px; }
.alert { width: 24px; margin-left: 3px; }
.l-alert { width: 21px; }
.rep { width: 18px; margin-left: 11px; }
.l-replay { width: 28px; margin: 0 1px 0 2px; }
.l-replay + .chev { width: 25px; padding-left: 3px; }
.hist { width: 25px; color: #666; margin-left: 1px; }
.toolbar .right { margin-left: auto; display: flex; align-items: center; padding-right: 3.500px; }
.barsicon { width: 12px; height: 12px; margin: 0 2px 0 7px; }
.l-bias { width: 41px; }
.l-bias + .chev { width: 18px; }
.round { width: 16px; height: 16px; border: 1px solid #3c3c3c; border-radius: 50%; display: flex; align-items: center; justify-content: center; margin-right: 3px; }
.round svg { width: 10px; height: 10px; stroke: none; }
.right .sep { margin: 0 2px 0 6px; }
.tool.t { width: 25.300px; }
.tool.t svg { width: 17px; height: 17px; }
.trade { width: 51px; height: 20px; margin-left: 2.500px; border: 1px solid #3a3a3a; border-radius: 10px; background: #000; color: #fff; display: flex; align-items: center; padding-left: 4px; letter-spacing: -0.2px; }
.trade span { width: 13px; height: 13px; border-radius: 50%; background: #fff; color: #000; display: flex; align-items: center; justify-content: center; margin-right: 2px; }
.trade svg { width: 9px; height: 5px; }
.publish { width: 46px; height: 20px; border-radius: 10px; background: #f2f2f2; color: #111; line-height: 20px; text-align: center; margin-left: 5px; letter-spacing: -0.2px; }

/* body */
.main { display: flex; height: 636px; padding-top: 2px; }
.left-bar { width: 35px; margin-right: 3px; background: #0f0f0f; padding-top: 3.300px; display: flex; flex-direction: column; align-items: center; border-top-right-radius: 4px; }
.btn { width: 23px; height: 25.300px; display: flex; align-items: center; justify-content: center; flex: none; }
.left-bar .btn { height: 22.300px; margin: 1.500px 0; border-radius: 3px; color: #b4b4b4; }
.left-bar .btn.on { background: #3b3b3b; color: #e0e0e0; }
.left-bar .btn.white { background: #f2f2f2; color: #222; }
.left-bar .btn.last { margin-top: auto; margin-bottom: 15.700px; }
hr { width: 24px; height: 1px; border: 0; background: #3a3a3a; margin: 3.900px 0; flex: none; }
.right-bar { width: 30px; margin-left: 3px; background: #0f0f0f; display: flex; flex-direction: column; align-items: center; padding-top: 0.500px; color: #b4b4b4; padding-bottom: 1px; }
.right-bar .btn { height: 30px; }
.right-bar .push { margin-top: auto; }
.right-bar .apps svg { width: 22px; height: 22px; padding: 2px; border-radius: 50%; background: #f5f5f5; color: #111; }

.center { width: 1209px; display: flex; flex-direction: column; }
.charts { display: flex; height: 580px; background: #555; }
.chart { position: relative; background: #fff; height: 580px; color: #222; }
.one { width: 613px; margin-right: 2.500px; border-top-left-radius: 3px; overflow: hidden; }
.two { width: 593.500px; border: 1px solid #777; border-left: 0; overflow: hidden; }
.plot { width: 613px; height: 580px; stroke: none; }
.two .plot { width: 593px; margin: -1px 0 0 0.500px; }
.plot text { font-size: 8.700px; fill: #333; }
.plot .strong { font-weight: 600; fill: #333; }
.plot .tag { fill: #9d9d9d; }
.up { fill: #a6a6a6; stroke: #858585; }
.dn { fill: #4a4a4a; stroke: #3a3a3a; }
.wick { fill: #777; }
.legend { position: absolute; left: 5px; top: 2px; height: 15px; display: flex; align-items: center; background: rgba(255,255,255,.5); font-size: 10.800px; white-space: nowrap; color: #333; }
.two .legend { top: 1px; }
.legend span { width: 105px; margin: 0 5px 0 3px; letter-spacing: -0.5px; }
.two .legend span { width: 98px; }
.mark { width: 9px; height: 8px; fill: #e83a55; stroke: none; margin-left: 2px; }
.count { position: absolute; left: 6px; top: 20px; width: 21px; height: 14px; border: 1px solid #e2e2e2; border-radius: 2px; background: rgba(255,255,255,.8); display: flex; align-items: center; font-size: 8px; color: #111; }
.two .count { top: 19px; left: 5px; }
.count svg { width: 14px; height: 14px; margin: 0 -1px 0 -1px; stroke-width: 1.300; }
.currency { position: absolute; right: 1px; top: 2px; width: 40px; height: 17px; border: 1px solid #ececec; border-radius: 3px; background: #fff; display: flex; align-items: center; justify-content: space-between; font-size: 8.200px; letter-spacing: -0.6px; padding-left: 1px; }
.two .currency { top: 1px; width: 44px; right: 0; }
.currency svg { width: 12px; height: 12px; stroke-width: 1.500; }
.tvlogo { position: absolute; left: 7px; top: 542px; width: 21px; height: 11px; color: #000; }
.hour { position: absolute; left: 523px; top: 546px; width: 14px; height: 14px; color: #333; }
.axisset { position: absolute; right: 16px; top: 564px; width: 12px; height: 12px; color: #333; stroke-width: 1.300; }

.ranges { display: flex; align-items: center; height: 26px; background: #0f0f0f; font-weight: 600; font-size: 9px; color: #cfcfcf; padding: 0 0 1px 4.500px; border-radius: 3px; white-space: nowrap; }
.ranges span { width: 19.200px; text-align: center; letter-spacing: -0.5px; }
.ranges .ytd { width: 24px; }
.ranges .sep { margin-left: 2px; }
.goto { width: 17px; height: 17px; margin-left: 7px; }
.clock { margin-left: auto; width: 66px; letter-spacing: -0.1px; margin-right: 2px; }
.eth { width: 18px; margin: 0 7px 0 4px; letter-spacing: -0.2px; }
.expand { width: 16px; height: 16px; margin: 0 7px 0 7px; }

.bottom { display: flex; align-items: center; height: 25px; margin-top: 3px; background: #0f0f0f; white-space: nowrap; border-radius: 3px 3px 0 0; }
.broker { position: relative; width: 16px; height: 16px; margin-left: 5px; border-radius: 3px; background: #f2f2f2; color: #000; display: flex; align-items: center; justify-content: center; }
.broker svg { width: 12px; height: 6px; }
.broker i { position: absolute; right: -2px; top: -2px; width: 5px; height: 5px; border-radius: 50%; background: #22a37c; }
.paper { width: 65px; margin-left: 5px; font-weight: 600; font-size: 9px; letter-spacing: -0.25px; }
.tradebtn { width: 41px; height: 17px; border: 1px solid #444; border-radius: 4px; line-height: 15px; text-align: center; font-weight: 600; letter-spacing: -0.1px; }
.favs { display: flex; align-items: center; width: 420px; height: 25px; margin-left: 106px; background: #1c1c1c; border-radius: 3px; color: #b8b8b8; }
.favs svg { width: 17px; height: 17px; margin-left: 8.330px; }
.favs .grip { width: 6px; height: 10px; margin: 0 0.500px 0 5px; color: #666; }
.panelup { margin-left: auto; margin-right: 5px; color: #999; }
.panelmax { width: 17px; height: 17px; margin-right: 4px; }

/* windows taskbar */
.taskbar { position: relative; display: flex; align-items: center; height: 32px; padding-bottom: 1px; border-top: 1px solid #3a4246; background: linear-gradient(90deg, #1b2429, #16262d 20%, #1d2430 45%, #21202b 60%, #1f222b 68%, #18282a 76%, #222228 83%, #182a29 90%, #1b2226); color: #eee; font-size: 8.200px; line-height: 11px; }
.weather { display: flex; align-items: center; padding-left: 11px; width: 424px; letter-spacing: -0.25px; }
.weather svg { width: 22px; height: 22px; margin-top: -3px; stroke: none; }
.weather text { font-size: 7.500px; fill: #222; }
.weather div { margin-left: 1px; }
.weather span { color: #bbb; }
.apps-row { display: flex; align-items: center; }
.app { position: relative; width: 22px; height: 25px; margin-right: 7.300px; display: flex; align-items: center; justify-content: center; border-radius: 3px; }
.app:first-child { width: 18px; margin-right: 8px; }
.app svg { width: 16px; height: 16px; stroke: none; }
.app.run::after { content: ""; position: absolute; bottom: 0; left: 9px; width: 4px; height: 2px; border-radius: 1px; background: #9a9a9a; }
.app.focus { background: #33333b; width: 26px; margin-left: -2px; margin-right: 5.300px; }
.app.focus::after { left: 8px; width: 10px; background: #e88a78; }
.app.focus i { position: absolute; right: 2px; top: 2px; width: 8px; height: 8px; border-radius: 50%; background: #f00808; }
.app em { position: absolute; right: -2px; top: 0; width: 10px; height: 9px; border-radius: 5px; background: #d83b4c; font-size: 6px; line-height: 9px; text-align: center; }
.tvapp svg { width: 16px; height: 16px; padding: 4px 1px; background: #0a0a0a; border-radius: 3px; color: #fff; }
.search { display: flex; align-items: center; width: 146px; height: 22px; margin-right: 6px; border-radius: 11px; background: linear-gradient(90deg, #3b4048, #47444e 75%, #33363f); font-size: 9.500px; letter-spacing: -0.4px; color: #d2d2d6; padding: 0 2px 0 7px; }
.lens { width: 11px; height: 11px; margin-right: 6px; stroke-width: 2; }
.pet { width: 33px; height: 17px; margin-left: auto; stroke: none; }
.tray { margin-left: auto; display: flex; align-items: center; }
.tray svg { height: 12px; }
.tray .w22 { width: 22px; }
.tray .w18 { width: 18px; }
.tray .w14 { width: 14px; }
.tray .mic { color: #c08a70; }
.tray .batt { width: 15px; height: 11px; margin-left: 5px; }
.time { width: 46px; text-align: right; letter-spacing: -0.1px; }
.tray .notif { width: 12px; height: 12px; margin: 0 12px 0 5px; }
```
FILE: chart.js
```
// [high, bodyTop, bodyBottom, low, direction] in window pixels
var left = [
    [50,50,80,84,0],[50,79,89,125,0],[50,89,137,178,0],[104,132,137,159,1],[131,131,239,254,0],
    [232,238,249,282,0],[168,172.5,251,257,1],[165,172,279,287,0],[205,277,278,316,1],[254,277,302,319,0],
    [237,258.5,302,316,1],[251,256.5,270.5,282,0],[268,271,314.5,387,0],[192,241,315,317,1],[224,241,338.5,350,0],
    [303,337,372.5,374,0],[289,294,403,421,1],[282,285.5,294,314,1],[280,286,341.5,347,0],[187,188.5,344,345,1],
    [175,188.5,256,279,0],[200,250,256,258,1],[235,235,265,279,0],[261,264.5,301,302,0],[243,247,301,319,1],
    [109,137,249,272,1],[133,138,207,231,0],[195,205,228,236,0],[205,207,232,248,1],[161,164,207,207,1],
    [145,160,166,166,1],[156,162,283,310,0],[276,277,351,375,0],[335,343,487,494,0],[451,464,497,497,1],
    [424,462,467,472,1],[433,439,464,507,1],[445,445,501,570,0],[488,498,502,513,1]
];
var right = [
    [215,225,239,239,0],[231,237,238,242,1],[229,237,238,245,1],[228,235,237,240,1],[227,231,236,237,1],
    [228,230,231,233,1],[228,228,237,238,0],[235,236,237,242,1],[229,236,237,240.5,1],[233,236,239,239,0],
    [218,221,239,239,1],[206.5,208,221,223,1],[201,203,208,208,1],[201,201.5,204,207,1],[190,191,202,202,1],
    [189,191,193,195,0],[189,192,194,197,1],[183,186,193,193,1],[182,185,187,187,1],[181,185,186,188.5,1],
    [176,177,185,186,1],[173,174,177,177,1],[157,159,174,174,1],[159,159,168,169,0],[166,168,173,175,0],
    [168,171,177,177,0],[166,176,177,177,1],[168,173,177,179,1],[165,167,173,177,1],[165,166,174,174,0],
    [162,166,174,175,1],[163,166,177,177,0],[170,176,198,198,0],[181,194,199,201,1],[192,195,228,238,0],
    [225,232,286,289,0],[263,266,286,292,1],[239,251,267,275,1],[245,251,309,312,0],[284,284.5,309,310,1],
    [265,283,285,293,1],[271,278.5,283.5,288,1],[273,279,284,291,0],[280,283,299,305,0],[298,299,305,318,0],
    [283,288,305,312,1],[272,286,296,307,0],[292,296,339,339,0],[316,339,347,351,0],[339,347,375,378,0],
    [361,375,403,408,0],[383,391,403,403,1],[383,391,403,403,0],[395,396,402,409,1],[385,385,396.5,396.5,1],
    [377,386,387,395,1],[377,385,387,397,1],[380,385,387,399,0],[378,379,387,392,1],[366,378,379,382,1],
    [353,358,379,393,1],[346,356,357,360,1],[349,356,358,358,0],[358,358,370,370,0],[369,369,380,380,0],
    [376,379,382.5,390,0],[375,382,388,389,0],[385,388,397,402,0],[379,393,396,398,1],[390,392,393,404,1],
    [384,390.5,399,410,0],[397,398,411,416,0],[396,409,414,417,0],[404,414.5,415.5,430,1],[395,413,427,432,0],
    [374,383,428,428,1],[382,382,391,397,0],[387,390.5,398,404,0],[390,397,415,421,0],[411,414,416,429,0],
    [411,413.5,443,450,0],[428,440.5,455,463,0],[430,452.5,463,471,0],[424,430,462,500,1],[421,425,430,437,1]
];

function candles(data, x0, step, width) {
    var out = '';
    data.forEach(function (c, i) {
        var x = x0 + i * step;
        var h = c[2] - c[1];
        out += `<rect class="wick" x="${x - 0.4}" y="${c[0]}" width="0.9" height="${c[3] - c[0]}"/>`;
        if (h <= 1) {
            out += `<rect class="wick" x="${x - width / 2}" y="${c[1]}" width="${width}" height="1"/>`;
        } else {
            out += `<rect class="${c[4] ? 'up' : 'dn'}" x="${x - width / 2 + 0.25}" y="${c[1] + 0.25}" width="${width - 0.5}" height="${h - 0.5}" stroke-width="0.5"/>`;
        }
    });
    return out;
}

function label(text, x, y, len, cls) {
    return `<text class="${cls || ''}" x="${x - len / 2}" y="${y + 3.1}" textLength="${len}" lengthAdjust="spacingAndGlyphs">${text}</text>`;
}

function prices(first, count, y0, step, diff, x, len, digits, skip) {
    var out = '';
    for (var i = 0; i < count; i++) {
        if (i === skip) continue;
        var p = (first - i * diff).toLocaleString('en-US', { minimumFractionDigits: digits });
        out += label(p, x, y0 + i * step, len);
    }
    return out;
}

var one = candles(left, 66.4, 11.16, 8.6);
one += '<path d="M245 421L435 494" stroke="#333" stroke-width="0.9" stroke-dasharray="1 1.4" fill="none"/>';
one += prices(47500, 19, 97.7, 27.78, 100, 625.3, 24, 0);
one += '<rect class="tag" x="608" y="493" width="40" height="11"/>' + label('03:58:36', 628.5, 498.5, 31);
[['11', 66.5], ['12', 133.5], ['13', 200.3], ['15', 245], ['17', 334.3], ['18', 401.3], ['19', 468], ['20', 535], ['22', 579.5]].forEach(function (t) {
    one += label(t[0], t[1], 624.5, 9, 'strong');
});
document.getElementById('chart1').innerHTML = one;

var two = candles(right, 657.4, 5.736, 4.6);
// the 24,300 row sits under the countdown tag, only its end shows
two += prices(25200, 14, 74.6, 39.1, 100, 1222.7, 35.5, 2, 9);
two += label('.00', 1234.9, 426.500, 11);
two += '<rect x="1195" y="68" width="50" height="7.500" fill="#fff"/>';
two += '<rect class="tag" x="1200" y="419" width="29" height="12"/>' + label('28:36', 1215.3, 425, 20);
[['18:00', 691.7], ['21:00', 726], ['18', 760.7], ['03:00', 795], ['06:00', 829.5], ['09:00', 864], ['12:00', 898.5], ['18:00', 955.7],
 ['21:00', 990], ['19', 1024.500], ['03:00', 1058.700], ['06:00', 1093], ['09:00', 1127.5], ['12:00', 1162], ['15:00', 1196.5]].forEach(function (t) {
    var day = t[0].length === 2;
    two += label(t[0], t[1], 624.5, day ? 8.500 : 19.5, day ? 'strong' : '');
});
two += '<rect x="1199" y="618" width="12" height="12" fill="#fff"/>';
document.getElementById('chart2').innerHTML = two;
```
